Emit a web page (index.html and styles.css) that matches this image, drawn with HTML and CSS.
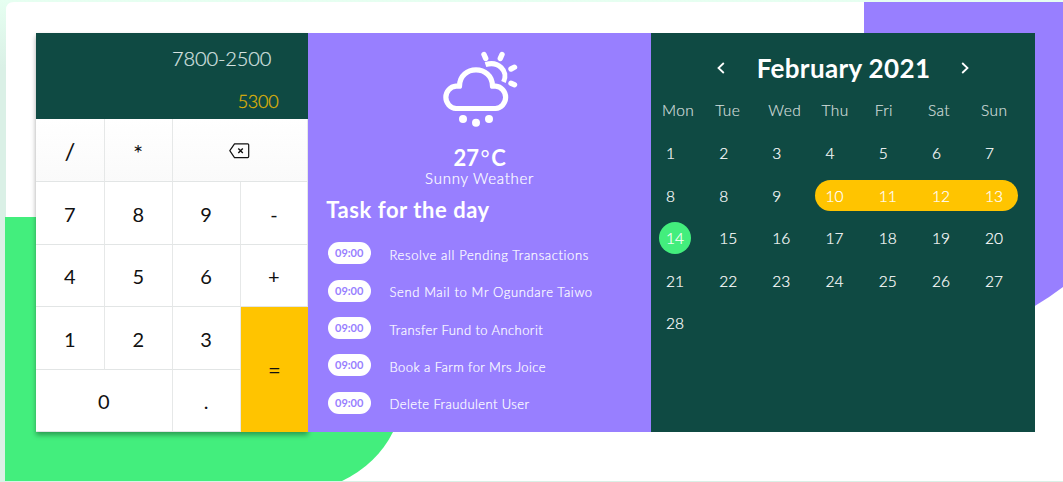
FILE: index.html
```html
<!DOCTYPE html>
<html lang="en">
<head>
<meta charset="utf-8">
<title>Dashboard widgets</title>
<link rel="stylesheet" href="styles.css">
</head>
<body>
<div class="page">
  <svg class="backdrop" viewBox="0 0 1063 482" aria-hidden="true">
    <path d="M6 481V10Q6 2 14 2H1063V481Z" fill="#fff"/>
    <path d="M864 2H1063V287Q1050 297 1034 306.500L864 306Z" fill="#987fff"/>
    <path d="M5 217H405L393 432Q377 464 342 481H5Z" fill="#43ee7d"/>
  </svg>
  <main class="board">
    <section class="calc">
      <div class="display">
        <div class="expr">7800-2500</div>
        <div class="result">5300</div>
      </div>
      <div class="keys">
        <div class="key soft slash">/</div>
        <div class="key soft star">*</div>
        <div class="key soft wide">
          <svg width="21" height="16" viewBox="0 0 21 16" fill="none" stroke="#111" stroke-width="1.2" stroke-linejoin="round"><path d="M5.500 .8H18.700Q19.700 .8 19.700 1.800V13.600Q19.700 14.600 18.700 14.600H5.500L.8 7.700Z"/><path d="M9.300 5.500L13.800 10M13.800 5.500L9.300 10" stroke-width="1.400"/></svg>
        </div>
        <div class="key">7</div><div class="key">8</div><div class="key">9</div><div class="key">-</div>
        <div class="key">4</div><div class="key">5</div><div class="key">6</div><div class="key">+</div>
        <div class="key">1</div><div class="key">2</div><div class="key">3</div><div class="key equals">=</div>
        <div class="key wide">0</div><div class="key">.</div>
      </div>
    </section>
    <section class="day">
      <svg class="weather" width="78" height="78" viewBox="441 50 78 78" fill="none" stroke="#fff" stroke-width="5.200">
        <path d="M456 108.500A11.200 11.200 0 0 1 456 86.200H459.500C459.500 64.500 492.500 64.500 492.500 86.200H495.500A11.200 11.200 0 0 1 495.500 108.500Z" stroke-linejoin="round"/>
        <path d="M485.500 64.700C498 60.500 509 71 503.500 82" stroke-width="5"/>
        <path d="M484 54.500L485.700 58.400M502 54.500L500.300 58.400M511 69L514.500 67.200M511 83.300L514.500 84.800" stroke-linecap="round" stroke-width="5.400"/>
        <g fill="#fff" stroke="none"><circle cx="463" cy="119" r="4"/><circle cx="476" cy="122.700" r="4"/><circle cx="489" cy="119" r="4"/></g>
      </svg>
      <div class="temp">27<span class="degree">°</span>C</div>
      <div class="sky">Sunny Weather</div>
      <h2 class="heading">Task for the day</h2>
      <ul class="tasks">
        <li><span class="time">09:00</span><span class="task loose">Resolve all Pending Transactions</span></li>
        <li><span class="time">09:00</span><span class="task loose">Send Mail to Mr Ogundare Taiwo</span></li>
        <li><span class="time">09:00</span><span class="task">Transfer Fund to Anchorit</span></li>
        <li><span class="time">09:00</span><span class="task">Book a Farm for Mrs Joice</span></li>
        <li><span class="time">09:00</span><span class="task">Delete Fraudulent User</span></li>
      </ul>
    </section>
    <section class="calendar">
      <header class="month">
        <svg width="8" height="12" viewBox="0 0 8 12"><path d="M6.800 1L1.500 6L6.800 11"/></svg>
        <h1>February 2021</h1>
        <svg width="8" height="12" viewBox="0 0 8 12"><path d="M1.200 1L6.500 6L1.200 11"/></svg>
      </header>
      <div class="week names"><span>Mon</span><span>Tue</span><span>Wed</span><span>Thu</span><span>Fri</span><span>Sat</span><span>Sun</span></div>
      <div class="week"><span>1</span><span>2</span><span>3</span><span>4</span><span>5</span><span>6</span><span>7</span></div>
      <div class="week"><span>8</span><span>8</span><span>9</span><div class="range"><span>10</span><span>11</span><span>12</span><span>13</span></div></div>
      <div class="week"><span class="today">14</span><span>15</span><span>16</span><span>17</span><span>18</span><span>19</span><span>20</span></div>
      <div class="week"><span>21</span><span>22</span><span>23</span><span>24</span><span>25</span><span>26</span><span>27</span></div>
      <div class="week"><span>28</span></div>
    </section>
  </main>
</div>
</body>
</html>
```
FILE: styles.css
```css
* { box-sizing: border-box; }
body { margin: 0; font-family: Lato, "Open Sans", sans-serif; }
h1, h2, ul { margin: 0; padding: 0; }
.page { position: relative; width: 1063px; height: 482px; padding: 33px 0 0 36px; overflow: hidden; background: linear-gradient(#e6fff1, #daf0e6 14%); }
.backdrop { position: absolute; left: 0; top: 0; width: 1063px; height: 482px; }
.board { position: relative; display: flex; width: 1000px; height: 399px; }

.calc { width: 272.300px; background: #fff; box-shadow: 0 3px 5px rgba(0, 0, 0, .35); }
.display { height: 86.400px; background: #0f4a43; display: flex; flex-direction: column; align-items: flex-end; }
.expr { margin: 13px 37px 0 0; font-size: 20px; line-height: 24px; font-weight: 300; color: #d7e2e0; letter-spacing: -.1px; -webkit-text-stroke: .2px; }
.result { margin: 20px 30px 0 0; font-size: 18px; line-height: 22px; font-weight: 300; color: #dcb00b; letter-spacing: -.3px; -webkit-text-stroke: .3px; }
.keys { display: grid; grid-template-columns: 68.700px 68px 67.900px 67.700px; grid-template-rows: 62.700px repeat(4, 62.500px); }
.key { display: flex; align-items: center; justify-content: center; padding-top: 2px; border-right: 1px solid #e6e8e8; border-bottom: 1px solid #e2e5e5; font-size: 20px; line-height: 24px; color: #111; }
.slash { font-size: 24px; }
.star { font-size: 24px; padding-top: 5px; }
.soft { background: linear-gradient(#fff, #fafafa); }
.soft svg { margin-top: -1px; }
.wide { grid-column: span 2; }
.equals { grid-row: span 2; background: #ffc400; border: 0; padding-top: 0; font-size: 22px; }

.day { width: 342.700px; background: #987fff; color: #fff; display: flex; flex-direction: column; align-items: center; padding-top: 17px; }
.weather { display: block; margin-right: -.5px; }
.temp { margin-top: 17px; font-size: 22px; line-height: 26px; font-weight: 700; }
.degree { margin: 0 1.500px; font-weight: 400; }
.sky { font-size: 15px; line-height: 18px; font-weight: 300; margin-top: -2px; letter-spacing: .75px; -webkit-text-stroke: .2px; }
.heading { align-self: flex-start; margin: 10px 0 0 18px; font-size: 22px; line-height: 26px; font-weight: 700; letter-spacing: .55px; }
.tasks { align-self: stretch; margin: 11.800px 0 0 19.400px; list-style: none; }
.tasks li { display: flex; align-items: center; height: 37.300px; }
.time { width: 43px; height: 22px; border-radius: 11px; background: #fff; color: #987fff; font-size: 11px; line-height: 22px; font-weight: 700; text-align: center; }
.task { margin: 3px 0 0 18.800px; font-size: 13px; line-height: 18px; font-weight: 300; letter-spacing: .43px; white-space: nowrap; -webkit-text-stroke: .2px; }
.loose { letter-spacing: .63px; }

.calendar { width: 384.500px; background: #0f4a43; color: #fff; padding: 20px 0 0 11px; }
.month { display: flex; align-items: center; justify-content: space-between; width: 252px; height: 30px; margin-left: 55.500px; }
.month svg { fill: none; stroke: #fff; stroke-width: 1.800; }
.month h1 { font-size: 26px; line-height: 30px; font-weight: 700; white-space: nowrap; letter-spacing: .35px; }
.week { display: grid; grid-template-columns: repeat(7, 53.200px); align-items: center; height: 42.600px; font-size: 15.500px; font-weight: 300; line-height: 20px; -webkit-text-stroke: .2px; }
.week > span { padding-left: 4px; }
.names { margin-top: 6.200px; color: #d0dcda; letter-spacing: .4px; }
.names > span { padding-left: 0; }
.range { grid-column: 4 / 8; display: grid; grid-template-columns: repeat(4, 53.200px); width: 203.500px; height: 31px; margin-left: -7px; padding-left: 11px; border-radius: 16px; background: #ffc400; align-items: center; }
.week > .today { width: 32px; height: 32px; margin-left: -3px; padding: 0; border-radius: 50%; background: #43ee7d; text-align: center; line-height: 32px; }
```
